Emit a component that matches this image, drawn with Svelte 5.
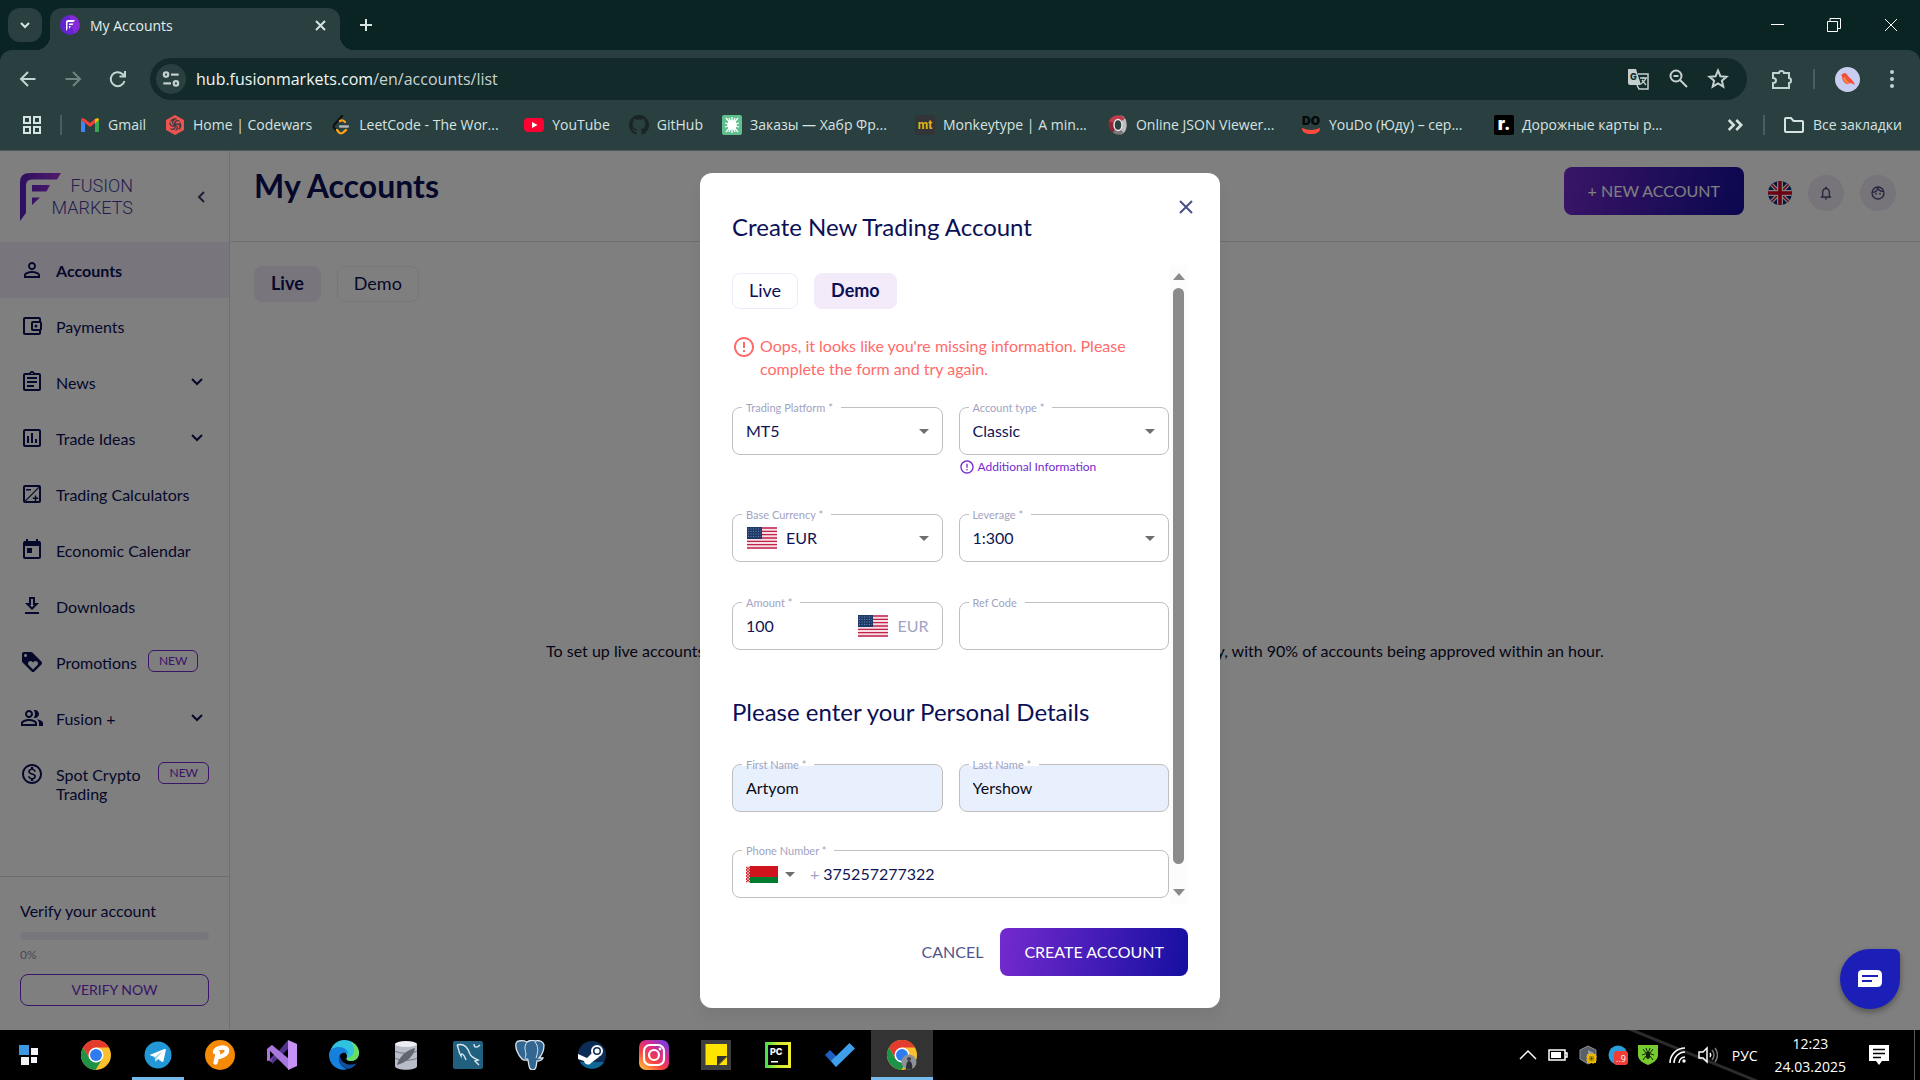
<script>
  const bookmarks = [
    { id: 'gmail', text: 'Gmail' },
    { id: 'codewars', text: 'Home | Codewars' },
    { id: 'leetcode', text: 'LeetCode - The Wor...', long: true },
    { id: 'youtube', text: 'YouTube' },
    { id: 'github', text: 'GitHub' },
    { id: 'habr', text: 'Заказы — Хабр Фр...', long: true },
    { id: 'monkey', text: 'Monkeytype | A min...', long: true },
    { id: 'json', text: 'Online JSON Viewer...', long: true },
    { id: 'youdo', text: 'YouDo (Юду) – сер...', long: true },
    { id: 'roadmap', text: 'Дорожные карты р...', long: true }
  ];

  const nav = [
    { text: 'Accounts', active: true, d: 'M12 5.9c1.16 0 2.1.94 2.1 2.1s-.94 2.1-2.1 2.1S9.9 9.16 9.9 8s.94-2.1 2.1-2.1m0 9c2.97 0 6.1 1.46 6.1 2.1v1.1H5.9V17c0-.64 3.13-2.1 6.1-2.1M12 4C9.79 4 8 5.79 8 8s1.79 4 4 4 4-1.79 4-4-1.79-4-4-4zm0 9c-2.67 0-8 1.34-8 4v3h16v-3c0-2.66-5.33-4-8-4z' },
    { text: 'Payments', d: 'M21 7.28V5c0-1.1-.9-2-2-2H5c-1.11 0-2 .9-2 2v14c0 1.1.89 2 2 2h14c1.1 0 2-.9 2-2v-2.28c.59-.35 1-.98 1-1.72V9c0-.74-.41-1.38-1-1.72zM20 9v6h-7V9h7zM5 19V5h14v2h-6c-1.1 0-2 .9-2 2v6c0 1.1.9 2 2 2h6v2H5zM16 10.5a1.5 1.5 0 1 0 0 3 1.5 1.5 0 1 0 0-3z' },
    { text: 'News', more: true, d: 'M7 15h7v2H7zm0-4h10v2H7zm0-4h10v2H7zM19 3h-4.18C14.4 1.84 13.3 1 12 1c-1.3 0-2.4.84-2.82 2H5c-1.1 0-2 .9-2 2v14c0 1.1.9 2 2 2h14c1.1 0 2-.9 2-2V5c0-1.1-.9-2-2-2zm-7-.25c.41 0 .75.34.75.75s-.34.75-.75.75-.75-.34-.75-.75.34-.75.75-.75zM19 19H5V5h14v14z' },
    { text: 'Trade Ideas', more: true, d: 'M19 3H5c-1.1 0-2 .9-2 2v14c0 1.1.9 2 2 2h14c1.1 0 2-.9 2-2V5c0-1.1-.9-2-2-2zm0 16H5V5h14v14zM7 10h2v7H7zm4-3h2v10h-2zm4 6h2v4h-2z' },
    { text: 'Trading Calculators', d: 'M19 3H5c-1.1 0-2 .9-2 2v14c0 1.1.9 2 2 2h14c1.1 0 2-.9 2-2V5c0-1.1-.9-2-2-2zm-.6 2L5 18.4V5h13.4zM5.6 19.4 19 6v13H5.6zM6 7h5v1.5H6zm8.8 6.5h1.5v2h2V17h-2v2h-1.5v-2h-2v-1.5h2z' },
    { text: 'Economic Calendar', d: 'M19 3h-1V1h-2v2H8V1H6v2H5c-1.11 0-1.99.9-1.99 2L3 19c0 1.1.89 2 2 2h14c1.1 0 2-.9 2-2V5c0-1.1-.9-2-2-2zm0 16H5V8h14v11zM7 10h5v5H7z' },
    { text: 'Downloads', d: 'M13 5v6h1.17L12 13.17 9.83 11H11V5h2m2-2H9v6H5l7 7 7-7h-4V3zm4 15H5v2h14v-2z' },
    { text: 'Promotions', badge: true, d: 'M21.41 11.58l-9-9C12.05 2.22 11.55 2 11 2H4c-1.1 0-2 .9-2 2v7c0 .55.22 1.05.59 1.42l9 9c.36.36.86.58 1.41.58.55 0 1.05-.22 1.41-.59l7-7c.37-.36.59-.86.59-1.41 0-.55-.23-1.06-.59-1.42zM5.5 7C4.67 7 4 6.33 4 5.5S4.67 4 5.5 4 7 4.67 7 5.5 6.33 7 5.5 7zm11.77 8.27L13 19.54l-4.27-4.27C8.28 14.81 8 14.19 8 13.5c0-1.38 1.12-2.5 2.5-2.5.69 0 1.32.28 1.77.74l.73.72.73-.73c.45-.45 1.08-.73 1.77-.73 1.38 0 2.5 1.12 2.5 2.5 0 .69-.28 1.32-.73 1.77z' },
    { text: 'Fusion +', more: true, d: 'M16.67 13.13C18.04 14.06 19 15.32 19 17v3h4v-3c0-2.18-3.57-3.47-6.33-3.87zM15 12c2.21 0 4-1.79 4-4s-1.79-4-4-4c-.47 0-.91.1-1.33.24C14.5 5.27 15 6.58 15 8s-.5 2.73-1.33 3.76c.42.14.86.24 1.33.24zM9 12c2.21 0 4-1.79 4-4s-1.79-4-4-4-4 1.79-4 4 1.79 4 4 4zm0-6c1.1 0 2 .9 2 2s-.9 2-2 2-2-.9-2-2 .9-2 2-2zM9 13c-2.67 0-8 1.34-8 4v3h16v-3c0-2.66-5.33-4-8-4zm6 5H3v-.99C3.2 16.29 6.3 15 9 15s5.8 1.29 6 2v1z' },
    { text: 'Spot Crypto Trading', badge: true, d: 'M12 2C6.48 2 2 6.48 2 12s4.48 10 10 10 10-4.48 10-10S17.52 2 12 2zm0 18c-4.41 0-8-3.59-8-8s3.59-8 8-8 8 3.59 8 8-3.59 8-8 8zm.31-8.86c-1.77-.45-2.34-.94-2.34-1.67 0-.84.79-1.43 2.1-1.43 1.38 0 1.9.66 1.94 1.64h1.71c-.05-1.34-.87-2.57-2.49-2.97V5H10.9v1.69c-1.51.32-2.72 1.3-2.72 2.81 0 1.79 1.49 2.69 3.66 3.21 1.95.46 2.34 1.15 2.34 1.87 0 .53-.39 1.39-2.1 1.39-1.6 0-2.23-.72-2.32-1.64H8.04c.1 1.7 1.36 2.66 2.86 2.97V19h2.34v-1.67c1.52-.29 2.72-1.16 2.73-2.77-.01-2.2-1.9-2.96-3.66-3.42z' }
  ];

  const alertPath = 'M11 15h2v2h-2v-2zm0-8h2v6h-2V7zm.99-5C6.47 2 2 6.48 2 12s4.47 10 9.99 10C17.52 22 22 17.52 22 12S17.52 2 11.99 2zM12 20c-4.42 0-8-3.58-8-8s3.58-8 8-8 8 3.58 8 8-3.58 8-8 8z';
  const tasks = ['chrome', 'telegram', 'payeer', 'vs', 'edge', 'db', 'mysql', 'postgres', 'steam', 'insta', 'sticky', 'pycharm', 'todo', 'profile'];
</script>

{#snippet usFlag()}
  <svg class="us" viewBox="0 0 30 22" aria-hidden="true">
    <path fill="#f6dfe4" d="M0 0h30v22H0z" />
    <path stroke="#c2224a" stroke-width="1.3" d="M0 1h30M0 4.3h30M0 7.6h30M0 11h30M0 14.3h30M0 17.6h30M0 21h30" />
    <path fill="#1d3a68" d="M0 0h15v12H0z" />
    <path stroke="#6f86a8" stroke-width="1" stroke-dasharray="1 1.5" d="M1 2h13M1 4.5h13M1 7h13M1 9.5h13" />
  </svg>
{/snippet}

{#snippet ukFlag()}
  <svg class="uk" viewBox="0 0 24 24" aria-hidden="true">
    <clipPath id="round"><circle cx="12" cy="12" r="12" /></clipPath>
    <g clip-path="url(#round)">
      <path fill="#00317f" d="M0 0h24v24H0z" />
      <path stroke="#fff" stroke-width="4" d="m0 0 24 24M24 0 0 24" />
      <path stroke="#d80027" stroke-width="1.5" d="m0 0 24 24M24 0 0 24" />
      <path stroke="#fff" stroke-width="6" d="M12 0v24M0 12h24" />
      <path stroke="#d80027" stroke-width="3.5" d="M12 0v24M0 12h24" />
    </g>
  </svg>
{/snippet}

{#snippet bookmarkIcon(id)}
  <svg class="fav" viewBox="0 0 20 20" aria-hidden="true">
    {#if id === 'gmail'}
      <path fill="#4285f4" d="M1 5v11a1 1 0 0 0 1 1h3V8z" />
      <path fill="#34a853" d="M19 5v11a1 1 0 0 1-1 1h-3V8z" />
      <path fill="#ea4335" d="m1 5 4 3 5 4 5-4V4l-5 4-5-4C3 2.5 1 3 1 5z" />
      <path fill="#fbbc04" d="M15 4c2-1.5 4-1 4 1l-4 3.5z" />
    {:else if id === 'codewars'}
      <path fill="#ef5350" stroke="#ef5350" stroke-width="2" stroke-linejoin="round" d="m10 1 8 4.5v9L10 19l-8-4.5v-9z" />
      <g fill="none" stroke="#303c42" stroke-width="1.3" stroke-linecap="round">
        <path d="M10 10c-1-3 1-5 4-4M10 10c2-2 5-1 5 2M10 10c3 1 3 4 1 5M10 10c1 3-1 5-4 4M10 10c-2 2-5 1-5-2M10 10c-3-1-3-4-1-5M6 6c1-1.500 3-2.500 5-2M15 8c1 2 1 4-1 6" />
      </g>
    {:else if id === 'leetcode'}
      <g fill="none" stroke-width="2.3" stroke-linecap="round">
        <path stroke="#111" d="M11 1 3.500 9.500c-1 1-1 3 0 4l2 2" />
        <path stroke="#ffa116" d="M9 6c2-1.500 3-1 5 1M6 15l2 2.500c1 1 3 1 4 0l3-2.500" />
        <path stroke="#b3b3b3" d="M9 11.500h8" />
      </g>
    {:else if id === 'youtube'}
      <rect y="3" width="20" height="14" rx="4" fill="#ff0033" /><path fill="#fff" d="m8 7 5.5 3L8 13z" />
    {:else if id === 'github'}
      <path fill="#1b2528" d="M10 0a10 10 0 0 0-3.2 19.5c.5.1.7-.2.7-.5v-2c-2.8.6-3.4-1.2-3.4-1.2-.5-1.2-1.1-1.5-1.1-1.5-.9-.6.1-.6.1-.6 1 .1 1.5 1 1.5 1 .9 1.6 2.4 1.1 3 .8 0-.6.3-1 .6-1.3-2.2-.3-4.6-1.1-4.6-5 0-1.1.4-2 1-2.7 0-.3-.4-1.3.1-2.7 0 0 .9-.2 2.8 1a9.6 9.6 0 0 1 5 0c1.9-1.2 2.8-1 2.8-1 .5 1.4.1 2.4.1 2.7.6.7 1 1.6 1 2.7 0 3.9-2.4 4.7-4.600 5 .4.3.7.9.7 1.9V19c0 .3.2.6.7.5A10 10 0 0 0 10 0z" />
    {:else if id === 'habr'}
      <rect width="20" height="20" rx="2" fill="#5fc08e" />
      <circle cx="10" cy="10" r="4.8" fill="#fff" />
      <path stroke="#fff" stroke-width="1.3" d="M10 2v16M4 3l12 14M16 3 4 17M3 8l14 4M3 12l14-4M7 3l6 14M13 3 7 17" />
    {:else if id === 'monkey'}
      <rect width="20" height="20" rx="4" fill="#323437" /><text x="10" y="14" text-anchor="middle" font-family="Roboto, sans-serif" font-size="12" font-weight="700" fill="#e2b714">mt</text>
    {:else if id === 'json'}
      <path fill="none" stroke="#bdbdbd" stroke-width="4.5" d="M12 17.5c6-2 6-13 0-15" />
      <path fill="none" stroke="#c23b4c" stroke-width="4.5" d="M15 5C12 1 4 2 3 8" />
      <path fill="none" stroke="#8b2735" stroke-width="4.5" d="M3 7c-1 5 2 9 5 10" />
      <path fill="none" stroke="#777" stroke-width="4" d="M6 16c3 2 6 2 8 0" />
      <ellipse cx="10" cy="10" rx="4" ry="5.5" fill="none" stroke="#e8e8e8" stroke-width="1.5" />
    {:else if id === 'youdo'}
      <text x="10" y="10" text-anchor="middle" font-family="Inter, sans-serif" font-size="12" font-weight="900" fill="#050808">DO</text>
      <path fill="#ff4b3e" d="M1 13q9 4 18 0c0 4-3 6-9 6s-9-2-9-6z" />
    {:else}
      <rect width="20" height="20" rx="2" fill="#000" /><text x="10" y="15" text-anchor="middle" font-family="Inter, sans-serif" font-size="17" font-weight="900" fill="#fff">r.</text>
    {/if}
  </svg>
{/snippet}

{#snippet chromeLogo()}
  <circle cx="15" cy="15" r="15" fill="#fbc02d" />
  <path fill="#e33b2e" d="M2 7.5a15 15 0 0 1 26 0H15L8.5 18.500z" />
  <path fill="#1e9247" d="M2 7.5 8.6 18.7l6.4 3.8 6.2-3.5L14.5 30A15 15 0 0 1 2 7.5z" />
  <circle cx="15" cy="15" r="7.5" fill="#fff" /><circle cx="15" cy="15" r="6" fill="#2f7cf0" />
{/snippet}

{#snippet taskIcon(id)}
  <svg class="app" viewBox="0 0 30 30" aria-hidden="true">
    {#if id === 'chrome'}
      {@render chromeLogo()}
    {:else if id === 'profile'}
      {@render chromeLogo()}
      <circle cx="22" cy="22" r="7.5" fill="#8d9298" /><path fill="#2c3038" d="M19 29c0-5 1-8 3-8s4 3 3 8z" /><circle cx="22" cy="19" r="2" fill="#4a4240" />
    {:else if id === 'telegram'}
      <circle cx="15" cy="15" r="13.5" fill="#2299d6" /><path fill="#fff" d="m6.5 15 15-6c1-.3 1.5.3 1.3 1.3L20.5 21c-.2 1-1 1.2-1.7.8L15 19l-2.5 2.5-.8-4.5z" /><path fill="#a9d3ea" d="m11.700 17 8-6-5.700 7-1.500 3.500z" />
    {:else if id === 'payeer'}
      <circle cx="15" cy="15" r="15" fill="#f58a07" /><path fill="none" stroke="#fff" stroke-width="4.5" stroke-linecap="round" stroke-linejoin="round" d="M10.5 22.5 13 13M10 12c1-5 12-6 12-1.5S15 17 12.5 17" />
    {:else if id === 'vs'}
      <path fill="#7044a8" d="m0 9 5-4 6 6-5 8v4L0 20z" /><path fill="#52338c" d="M5 19 21 0v9L5 24z" /><path fill="#a878dc" d="m0 9 5-4 17 14v11L3 11v9l-3 1z" /><path fill="#c792f5" d="m21 0 9 4v22l-9 4z" /><path fill="#000" d="m3 11 4 4-4 4z" />
    {:else if id === 'edge'}
      <path fill="#31c3dd" d="M1 12C3 4 9 0 15 0c9 0 15 6 15 13 0 5-4 8-8 8-3 0-6-1-4-4 1-6-10-9-17-5z" /><path fill="#6bdd62" d="M22 2c5 2 8 6 8 11 0 5-4 8-8 8-2 0-5-1-4-3 8-1 9-10 4-16z" /><path fill="#1681dd" d="M0 15C0 9 5 7 10 7c5 0 9 3 9 7-5-3-9 0-9 5 0 5 4 9 9 10C9 32 0 25 0 15z" /><path fill="#124e9c" d="M11 15c-4 6 2 13 9 14 3-1 6-3 8-6-8 4-17 0-17-8z" />
    {:else if id === 'db'}
      <path fill="#b9bdc9" d="M4 4v22c0 5 22 5 22 0V4z" /><ellipse cx="15" cy="4" rx="11" ry="3" fill="#eceef4" /><path fill="none" stroke="#70747e" d="M4 11c4 3 18 3 22 0M4 18c4 3 18 3 22 0" /><path fill="#62666e" d="M6 25C8 17 15 10 24 8c-1 8-8 14-18 17z" />
    {:else if id === 'mysql'}
      <rect x="0" y="1" width="30" height="28" rx="2" fill="#22607f" /><path fill="none" stroke="#d7e5ec" stroke-width="1.4" d="M4 5c7-2 11 3 13 9 1 3 4 4 8 6l-3 1 4 4M4 5c2 3 1 6 4 11 0-4 3-2 5 4M21 4c0 4 3 4 6 1" />
    {:else if id === 'postgres'}
      <path fill="#336791" stroke="#dbe5ee" stroke-width="1.3" d="M4 1c4-1 6 0 8 1 3-2 6-2 8-1 4-1 8 0 9 4 0 5-2 10-5 13h4c-1 2-4 3-6 3-1 4 0 9-4 9s-4-4-5-10c-3 0-4 1-6-1C3 15 0 8 1 4c0-1 1-3 3-3z" /><path fill="none" stroke="#dbe5ee" d="M12 2c-3 4-2 8-1 12 0 3-3 5 2 5M20 2c4 5 3 10 1 16" />
    {:else if id === 'steam'}
      <circle cx="15" cy="15" r="14" fill="#0d2c55" /><path fill="#0f6796" d="M3 22a14 14 0 0 0 24 0z" /><path fill="#fff" d="m1 14 9 4 7-7 5 6-8 6c-2 3-7 1-7-2l-6-2z" /><circle cx="20" cy="11" r="5" fill="#0d2c55" stroke="#fff" stroke-width="2" /><circle cx="20" cy="11" r="2.5" fill="#fff" />
    {:else if id === 'insta'}
      <linearGradient id="ig" x1="0" y1="1" x2=".8" y2="0"><stop stop-color="#ffd23e" /><stop offset=".4" stop-color="#f7443f" /><stop offset=".7" stop-color="#d42b8e" /><stop offset="1" stop-color="#7b3ddb" /></linearGradient>
      <rect width="30" height="30" rx="7" fill="url(#ig)" /><rect x="5" y="5" width="20" height="20" rx="6" fill="none" stroke="#fff" stroke-width="2.2" /><circle cx="15" cy="15" r="5" fill="none" stroke="#fff" stroke-width="2.2" /><circle cx="21" cy="9" r="1.4" fill="#fff" />
    {:else if id === 'sticky'}
      <path fill="#3f3f3f" d="M0 0h30v30H0z" /><path fill="#ffe400" d="M4.5 4H26v12l-9 9H4.500z" /><path fill="#333" d="M16 16h10l-10 10z" /><path fill="#ffe400" d="M26 17v8h-8z" />
    {:else if id === 'pycharm'}
      <linearGradient id="pc"><stop stop-color="#3be04f" /><stop offset=".5" stop-color="#cfe82e" /><stop offset="1" stop-color="#f4ee2e" /></linearGradient>
      <path fill="url(#pc)" d="M2 2h26v26H2z" /><path fill="#000" d="M5 5h20v20H5z" /><text x="7" y="15" font-family="Inter, sans-serif" font-size="9" font-weight="800" fill="#fff">PC</text><path fill="#fff" d="M8 21h7v1.5H8z" />
    {:else if id === 'todo'}
      <path fill="#1f5fc4" d="m0 15 5-5 9 9-3 8z" /><path fill="#3ea0ea" d="m6 21 18.5-18L30 8.5 11 27z" />
    {/if}
  </svg>
{/snippet}

<div class="screen">
  <header class="browser">
    <div class="strip">
      <button class="search-tabs" aria-label="Search tabs"><svg viewBox="0 0 34 34"><path d="m13 15 4 4 4-4" /></svg></button>
      <div class="tab">
        <svg class="fav" viewBox="0 0 20 20" aria-hidden="true"><circle cx="10" cy="10" r="10" fill="#6425cf" /><path fill="#a332e0" d="M10 0a10 10 0 0 1 5 18.600C12 14 9 6 10 0z" opacity=".5" /><path fill="#fff" d="M6 16V7q0-2 2-2h7l-1.500 2H8.500q-1 0-1 1v6zM9 8.500h4.500L12.500 10H9zM9 11h2l-2 3z" /></svg>
        <span>My Accounts</span>
        <button aria-label="Close tab"><svg viewBox="0 0 20 20"><path d="m6 6 9 9m0-9-9 9" /></svg></button>
      </div>
      <button class="plus" aria-label="New tab"><svg viewBox="0 0 20 20"><path d="M10 4v12M4 10h12" /></svg></button>
      <div class="window">
        <button aria-label="Minimize"><svg viewBox="0 0 16 16"><path d="M2 7.500h13" /></svg></button>
        <button aria-label="Restore"><svg viewBox="0 0 16 16"><path d="M1.500 4.500h10v10h-10zM4 4V1.500h10.500v10H12" /></svg></button>
        <button aria-label="Close"><svg viewBox="0 0 16 16"><path d="m2 2 12 12m0-12L2 14" /></svg></button>
      </div>
    </div>

    <div class="tools">
      <button aria-label="Back"><svg viewBox="0 0 20 20"><path d="M17.500 10H3m7-7-7 7 7 7" /></svg></button>
      <button class="dim" aria-label="Forward"><svg viewBox="0 0 20 20"><path d="M2.500 10H17m-7-7 7 7-7 7" /></svg></button>
      <button aria-label="Reload"><svg viewBox="0 0 20 20"><path d="M16.500 12a7 7 0 1 1-2-7l2.500 2.500M17 2v5.500h-5.500" /></svg></button>
      <div class="address">
        <button class="site" aria-label="Site information"><svg viewBox="0 0 20 20"><circle cx="5.500" cy="6" r="2" /><path d="M10 6h7" /><circle cx="14.500" cy="14" r="2" /><path d="M3 14h7" /></svg></button>
        <label class="url"><input aria-label="Address" value="" /><span><b>hub.fusionmarkets.com</b>/en/accounts/list</span></label>
        <button aria-label="Translate"><svg viewBox="0 0 22 22"><path fill="currentColor" stroke="none" d="M1 1h8l5 16H3a2 2 0 0 1-2-2z" /><path stroke-width="1.500" d="M11 6h10v15h-9l-2-4" /><path stroke-width="1.300" d="M13 10h7m-4-1v2m3-1c-1 3-3 4-5 6m1-4 4 5" /><text x="3" y="12" font-family="Inter, sans-serif" font-size="9" font-weight="800" fill="#122a2a" stroke="none">G</text></svg></button>
        <button aria-label="Zoom"><svg viewBox="0 0 22 22"><circle cx="9" cy="8" r="5.500" /><path d="m13 12 7 7M6.500 8h5" /></svg></button>
        <button aria-label="Bookmark this page"><svg viewBox="0 0 22 22"><path d="m11 2.500 2.400 5.700 6.100.5-4.600 4 1.400 6L11 15.500l-5.300 3.200 1.400-6-4.600-4 6.100-.5z" /></svg></button>
      </div>
      <button class="ext" aria-label="Extensions"><svg viewBox="0 0 22 22"><path d="M2 5h6a2.500 2 0 0 1 5 0h5v5a2 2.500 0 0 1 0 5v5H2v-5c4 0 4-5 0-5z" /></svg></button>
      <i class="rule"></i>
      <button class="avatar" aria-label="Profile"><svg viewBox="0 0 25 25"><circle cx="12.500" cy="12.500" r="12.500" fill="#c9cdef" stroke="none" /><path fill="#f2503f" stroke="none" d="m6 8 3-2c2 0 3 1 4 3l5 5 2 4-4-2-4 1c-3-1-5-4-5-8z" /><path fill="#ff8a3c" stroke="none" d="M8 11c1 4 4 6 7 5-2-1-4-3-5-6z" /></svg></button>
      <button aria-label="Menu"><svg viewBox="0 0 20 20"><g fill="currentColor" stroke="none"><circle cx="10" cy="3" r="2" /><circle cx="10" cy="10" r="2" /><circle cx="10" cy="17" r="2" /></g></svg></button>
    </div>

    <nav class="bookmarks" aria-label="Bookmarks">
      <button class="grid-btn" aria-label="Apps"><svg viewBox="0 0 20 20"><path d="M2 2h6v6H2zM12 2h6v6h-6zM2 12h6v6H2zM12 12h6v6h-6z" /></svg></button>
      <i class="rule"></i>
      {#each bookmarks as b}
        <a href="#{b.id}" class:long={b.long}>{@render bookmarkIcon(b.id)}<span>{b.text}</span></a>
      {/each}
      <button class="overflow" aria-label="More bookmarks"><svg viewBox="0 0 16 16"><path d="m3 4 4 4-4 4M9 4l4 4-4 4" /></svg></button>
      <i class="rule"></i>
      <a class="all" href="#all"><svg class="folder" viewBox="0 0 22 20"><path d="M2 4q0-1 1-1h5l2.500 3H19q1 0 1 1v9q0 1-1 1H3q-1 0-1-1z" /></svg><span>Все закладки</span></a>
    </nav>
  </header>

  <div class="page">
    <aside>
      <div class="brand">
        <svg class="mark" viewBox="0 0 41 48" aria-hidden="true">
          <linearGradient id="fm"><stop stop-color="#5a1fc0" /><stop offset="1" stop-color="#a238d8" /></linearGradient>
          <path fill="url(#fm)" d="M0 48V9q0-9 10-9h31l-4 6.500H12q-6 0-6 6V40zM12 12h18l-3.500 6.500H12zM12 24.500h8L12 32z" />
        </svg>
        <span class="word">FUSION<br />MARKETS</span>
        <button aria-label="Collapse menu"><svg viewBox="0 0 16 16"><path d="m11 3-5 5 5 5" /></svg></button>
      </div>
      <nav class="menu" aria-label="Main">
        {#each nav as n}
          <a href="#{n.text}" class:active={n.active}>
            <svg class="glyph" viewBox="0 0 24 24"><path fill-rule="evenodd" d={n.d} /></svg>
            <span>{n.text}</span>
            {#if n.badge}<em>NEW</em>{/if}
            {#if n.more}<svg class="more" viewBox="0 0 16 16"><path d="m3 5 5 5 5-5" /></svg>{/if}
          </a>
        {/each}
      </nav>
      <section class="verify">
        <p>Verify your account</p>
        <div class="bar"></div>
        <small>0%</small>
        <button>VERIFY NOW</button>
      </section>
    </aside>

    <main>
      <div class="top">
        <h1>My Accounts</h1>
        <button class="primary">+ NEW ACCOUNT</button>
        <button class="flag" aria-label="Language">{@render ukFlag()}</button>
        <button class="round" aria-label="Notifications"><svg viewBox="0 0 24 24"><path d="M12 22c1.100 0 2-.9 2-2h-4c0 1.100.9 2 2 2zm6-6v-5c0-3.070-1.630-5.640-4.500-6.320V4c0-.83-.67-1.500-1.500-1.500s-1.500.67-1.500 1.500v.68C7.640 5.360 6 7.920 6 11v5l-2 2v1h16v-1l-2-2zm-2 1H8v-6c0-2.480 1.510-4.500 4-4.500s4 2.020 4 4.500v6z" /></svg></button>
        <button class="round" aria-label="Profile menu"><svg viewBox="0 0 24 24"><path fill="none" stroke="currentColor" stroke-width="2" d="M3 12a9 9 0 1 0 18 0 9 9 0 1 0-18 0M3.500 11c4 0 7-2 8-6 2 3 5 5 9 4.500" /><circle cx="9" cy="13" r="1.300" /><circle cx="15" cy="13" r="1.300" /></svg></button>
      </div>
      <div class="kinds">
        <button class="on">Live</button>
        <button>Demo</button>
      </div>
      <p class="empty">To set up live accounts, please verify your profile. We review all applications quickly and diligently, with 90% of accounts being approved within an hour.</p>
    </main>

    <div class="overlay">
      <form class="dialog" aria-labelledby="dialog-title">
        <button type="button" class="close" aria-label="Close"><svg viewBox="0 0 16 16"><path d="m2 2 12 12m0-12L2 14" /></svg></button>
        <h2 id="dialog-title">Create New Trading Account</h2>
        <div class="scroller">
          <div class="body">
            <div class="kinds">
              <button type="button">Live</button>
              <button type="button" class="on">Demo</button>
            </div>
            <div class="error">
              <svg viewBox="0 0 24 24"><path d={alertPath} /></svg>
              <p>Oops, it looks like you're missing information. Please complete the form and try again.</p>
            </div>
            <div class="fields">
              <div class="field">
                <label for="platform">Trading Platform *</label>
                <select id="platform"><option>MT5</option></select><i class="caret"></i>
              </div>
              <div class="cell">
                <div class="field">
                  <label for="type">Account type *</label>
                  <select id="type"><option>Classic</option></select><i class="caret"></i>
                </div>
                <a class="info" href="#info"><svg viewBox="0 0 24 24"><path d={alertPath} /></svg>Additional Information</a>
              </div>
              <div class="field">
                <label for="currency">Base Currency *</label>
                {@render usFlag()}<select id="currency"><option>EUR</option></select><i class="caret"></i>
              </div>
              <div class="field">
                <label for="leverage">Leverage *</label>
                <select id="leverage"><option>1:300</option></select><i class="caret"></i>
              </div>
              <div class="field">
                <label for="amount">Amount *</label>
                <input id="amount" value="100" />{@render usFlag()}<span class="unit">EUR</span>
              </div>
              <div class="field">
                <label for="ref">Ref Code</label>
                <input id="ref" />
              </div>
            </div>
            <h3>Please enter your Personal Details</h3>
            <div class="fields personal">
              <div class="field filled">
                <label for="first">First Name *</label>
                <input id="first" value="Artyom" />
              </div>
              <div class="field filled">
                <label for="last">Last Name *</label>
                <input id="last" value="Yershow" />
              </div>
              <div class="field wide">
                <label for="phone">Phone Number *</label>
                <button type="button" class="country" aria-label="Country: Belarus">
                  <svg class="by" viewBox="0 0 32 17"><path fill="#d0141e" d="M0 0h32v11H0z" /><path fill="#007c30" d="M0 11h32v6H0z" /><path fill="#f3d9dc" d="M0 0h4v17H0z" /><path fill="none" stroke="#d0141e" stroke-width="1" d="m0 1 4 3-4 3 4 3-4 3 4 3M4 1 0 4l4 3-4 3 4 3-4 3" /></svg>
                  <i class="caret"></i>
                </button>
                <span class="unit">+</span><input id="phone" value="375257277322" />
              </div>
            </div>
          </div>
          <div class="track" aria-hidden="true"><i class="up"></i><i class="thumb"></i><i class="down"></i></div>
        </div>
        <div class="actions">
          <button type="button" class="cancel">CANCEL</button>
          <button type="submit" class="primary">CREATE ACCOUNT</button>
        </div>
      </form>
    </div>

    <button class="chat" aria-label="Open chat"><svg viewBox="0 0 24 18"><path fill="#fff" d="M4 0h15q5 0 5 5v7q0 5-5 5H0V4q0-4 4-4z" /><path stroke="#1b1fb8" stroke-width="2" d="M4 6h16M4 11h10" /></svg></button>
  </div>

  <footer class="taskbar">
    <svg class="streak" viewBox="0 0 130 50" aria-hidden="true"><path d="M0-2 130 51" /></svg>
    <button class="start" aria-label="Start"><svg viewBox="0 0 20 20"><path fill="#3d97e3" d="M0 0h10v10H0z" /><path fill="#f4f4f8" d="M12 3h7v7h-7zM2 12h8v8H2zM12 12h6v6h-6z" /></svg></button>
    {#each tasks as t}
      <button class="task" class:running={t === 'telegram'} class:current={t === 'profile'} aria-label={t}>{@render taskIcon(t)}</button>
    {/each}
    <div class="tray">
      <button aria-label="Show hidden icons"><svg viewBox="0 0 20 20"><path d="m2 14 8-8 8 8" /></svg></button>
      <button aria-label="Battery"><svg viewBox="0 0 20 20"><path d="M1 5h16v10H1zM17 8h2v4h-2" /><path fill="#fff" stroke="none" d="M3 7h10v6H3z" /></svg></button>
      <button aria-label="System utility"><svg viewBox="0 0 20 20"><path fill="#596069" stroke="#8b929a" stroke-width="1" d="m10 1 8 4v9l-8 5-8-5V5z" /><path fill="#c7ccd1" stroke="none" d="m10 5 6 3-5 8z" opacity=".6" /><path fill="#2b2a10" stroke="#e8b800" stroke-width="2" d="M10 10h7v7h-7z" /><path stroke="#e8b800" stroke-width="1" d="M8 12h11M8 15h11M12 8v11M15 8v11" /></svg></button>
      <button aria-label="Messages"><svg viewBox="0 0 20 20"><circle cx="10" cy="10" r="9.500" fill="#2a9fdc" stroke="none" /><rect x="6" y="6" width="14" height="14" rx="3" fill="#f23c34" stroke="none" /><text x="13" y="17" text-anchor="middle" font-family="Open Sans, sans-serif" font-size="9" fill="#fff" stroke="none">..9</text></svg></button>
      <button aria-label="Antivirus"><svg viewBox="0 0 20 20"><path fill="#76cc2f" stroke="none" d="M0 0h20v10c0 5-5 8-10 10C5 18 0 15 0 10z" /><ellipse cx="10" cy="10" rx="2" ry="4" fill="#10220a" stroke="none" /><path stroke="#10220a" stroke-width="1" d="M5 4l3 4h4l3-4M4 10l3-1h6l3 1M5 15l3-4h4l3 4M8 3l1 3M12 3l-1 3" /></svg></button>
      <button aria-label="Network"><svg viewBox="0 0 20 20"><circle cx="16" cy="16" r="1.700" fill="#fff" stroke="none" /><path d="M11 18a6 6 0 0 1 6-6M6 18A11 11 0 0 1 17 7M2 18A15 15 0 0 1 17 3" /></svg></button>
      <button aria-label="Volume"><svg viewBox="0 0 20 20"><path d="M1 7h4l4-4v14l-4-4H1zM12 8q1.500 2 0 4" /><path stroke="#777" d="M14 5q4 5 0 10M17 3q5 7 0 14" /></svg></button>
      <span class="lang">РУС</span>
      <time>12:23<br />24.03.2025</time>
      <button aria-label="Notifications"><svg viewBox="0 0 20 20"><path fill="#fff" stroke="none" d="M0 0h20v16h-7l-3 4-3-4H0z" /><path stroke="#000" d="M4 4.500h12M4 8.500h12M4 12.500h8" /></svg></button>
      <i class="peek"></i>
    </div>
  </footer>
</div>

<style>
  :global(body) { margin: 0; }
  .screen {
    display: flex; flex-direction: column; min-height: 100vh;
    font-family: Lato, sans-serif; font-size: 16px; color: #0a1056;
  }
  .screen * { box-sizing: border-box; }
  button { border: 0; padding: 0; margin: 0; background: none; font: inherit; color: inherit; cursor: pointer; }
  a { color: inherit; text-decoration: none; }
  h1, h2, h3, p { margin: 0; font-weight: 400; }
  svg { display: block; flex: none; }

  /* browser frame */
  .browser { font-family: "Open Sans", sans-serif; font-size: 14px; color: #d5e3e1; background: #0a2423; }
  .browser button svg, .folder { width: 20px; height: 20px; fill: none; stroke: currentColor; stroke-width: 2; }
  .fav { width: 20px; height: 20px; }
  .strip { display: flex; align-items: center; height: 50px; padding-left: 8px; }
  .search-tabs { width: 34px; height: 34px; border-radius: 12px; background: #2a3f40; }
  .browser .search-tabs svg { width: 34px; height: 34px; }
  .tab {
    position: relative; display: flex; align-items: center; gap: 10px; align-self: flex-end;
    width: 290px; height: 42px; margin-left: 8px; padding: 0 10px 8px 10px; border-radius: 12px 12px 0 0; background: #2a3f40;
  }
  .tab::before, .tab::after { content: ""; position: absolute; bottom: 0; width: 14px; height: 14px; }
  .tab::before { right: 100%; background: radial-gradient(circle at 0 0, transparent 14px, #2a3f40 14px); }
  .tab::after { left: 100%; background: radial-gradient(circle at 100% 0, transparent 14px, #2a3f40 14px); }
  .tab span { flex: 1; color: #e4eeec; }
  .plus { margin-left: 16px; }
  .window { display: flex; margin-left: auto; padding-right: 1px; }
  .window button { display: grid; place-items: center; width: 57px; height: 50px; color: #fff; }
  .browser .window svg { width: 16px; height: 16px; stroke-width: 1; }
  .tools { display: flex; align-items: center; height: 58px; padding: 0 18px; background: #2a3f40; border-radius: 12px 12px 0 0; }
  .tools > button { margin-right: 25px; color: #bcd6d4; }
  .tools .dim { color: #6d8583; }
  .address { flex: 1; display: flex; align-items: center; gap: 18px; height: 42px; margin-left: -3px; padding: 0 18px 0 6px; border-radius: 21px; background: #122a2a; }
  .address button { color: #c3d0ce; }
  .browser .address svg { width: 22px; height: 22px; }
  .address .site { display: grid; place-items: center; width: 30px; height: 30px; border-radius: 50%; background: #2a3f40; }
  .url { position: relative; flex: 1; display: flex; margin-left: -8px; font-size: 16px; line-height: 22px; color: #c6d3d1; }
  .url input { position: absolute; inset: 0; opacity: 0; }
  .url b { font-weight: 400; color: #f0f6f5; }
  .tools > .ext { margin: 0 20px 0 24px; }
  .browser .ext svg { width: 22px; height: 22px; }
  .rule { flex: none; width: 2px; height: 20px; background: #46605f; }
  .tools > .avatar { margin: 0 22px 0 20px; }
  .browser .avatar svg { width: 25px; height: 25px; }
  .tools > button:last-child { margin-right: 0; }
  .bookmarks { display: flex; align-items: center; height: 43px; padding: 0 18px 9px 22px; background: #2a3f40; border-bottom: 1px solid #4a5a5b; }
  .grid-btn { margin-right: 18px; }
  .bookmarks .rule + a { margin-left: 18px; }
  .bookmarks a { display: flex; align-items: center; gap: 8px; margin-right: 19px; white-space: nowrap; }
  .bookmarks .long span { width: 146px; }
  .overflow { margin-left: auto; }
  .browser .overflow svg { width: 20px; height: 20px; }
  .overflow + .rule { margin-left: 18px; }
  .bookmarks .all { margin: 0 0 0 18px; }
  .folder { width: 22px; }

  /* site shell */
  .page { position: relative; flex: 1; display: flex; background: #fff; }
  aside { display: flex; flex-direction: column; width: 230px; border-right: 1px solid #dcdce6; }
  .brand { display: flex; align-items: flex-start; height: 91px; padding: 22px 20px 0; }
  .mark { width: 41px; height: 48px; }
  .word { flex: none; width: 84px; margin: 2px 0 0 -12px; font-family: Roboto, sans-serif; font-weight: 300; font-size: 18px; line-height: 22px; text-align: right; color: #4b3aa0; }
  .brand button { margin: 16px 0 0 60px; }
  .brand button svg { width: 16px; height: 16px; fill: none; stroke: #3a3d70; stroke-width: 2; }
  .menu { flex: 1; }
  .menu a { display: flex; align-items: flex-start; min-height: 56px; padding: 16px 20px 0; line-height: 19px; }
  .menu a.active { background: #f3eafa; font-weight: 700; }
  .menu span { margin: 3px 0 0 12px; max-width: 140px; }
  .menu em { margin: 0 0 0 11px; padding: 0 10px; border: 1px solid #7529cf; border-radius: 6px; font-style: normal; font-size: 12px; line-height: 20px; color: #7529cf; }
  .menu a:last-child span { width: 92px; }
  .glyph { width: 24px; height: 24px; fill: #0a1056; }
  .more { width: 16px; height: 16px; margin: 4px 4px 0 auto; fill: none; stroke: #0a1056; stroke-width: 2; }
  .verify { display: flex; flex-direction: column; padding: 23px 20px 24px; border-top: 1px solid #d9d8ea; }
  .verify p { line-height: 22px; }
  .bar { height: 8px; margin-top: 10px; border-radius: 4px; background: #f0eafa; }
  .verify small { margin: 7px 0 11px; font-size: 12px; line-height: 16px; color: #9092ac; }
  .verify button { height: 32px; padding-bottom: 2px; border: 1px solid #7529cf; border-radius: 8px; font-size: 14px; color: #7529cf; }

  main { flex: 1; display: flex; flex-direction: column; }
  .top { display: flex; align-items: flex-start; height: 91px; padding: 16px 24px 0; border-bottom: 1px solid #dcdce6; }
  .top h1 { flex: 1; font-size: 32px; line-height: 38px; font-weight: 700; }
  .primary { height: 48px; padding: 0 24px 2px; border-radius: 8px; background: linear-gradient(100deg, #742acf, #150f9f); color: #fff; font-size: 16px; }
  .flag { margin: 14px 16px 0 24px; }
  .uk { width: 24px; height: 24px; }
  .round { display: grid; place-items: center; width: 36px; height: 36px; margin: 8px 0 0; border-radius: 50%; background: #efe8f5; color: #4b4d7c; }
  .round + .round { margin-left: 16px; }
  .round svg { width: 16px; height: 16px; fill: currentColor; }
  .kinds { display: flex; gap: 16px; }
  .kinds button { height: 36px; padding: 0 16px 2px; border: 1px solid #f0eafa; border-radius: 8px; font-size: 18px; }
  .kinds .on { border-color: #f3eafa; background: #f3eafa; font-weight: 700; }
  main .kinds { padding: 24px; }
  .empty { flex: 1; display: grid; place-items: center; padding-bottom: 56px; text-align: center; white-space: nowrap; color: #0a0a2c; }

  /* dialog */
  .overlay { position: absolute; inset: 0; display: grid; place-items: center; background: rgba(0, 0, 0, 0.5); }
  .dialog { position: relative; width: 520px; padding: 32px; border-radius: 12px; background: #fff; box-shadow: 0 11px 15px rgba(0, 0, 0, 0.05); }
  .close { position: absolute; top: 26px; right: 26px; }
  .close svg { width: 16px; height: 16px; fill: none; stroke: #4a4e86; stroke-width: 2; }
  .dialog h2, .dialog h3 { font-size: 24px; line-height: 44px; }
  .scroller { display: flex; margin-top: 16px; }
  .body { flex: 1; padding: 8px 0 6px; }
  .error { display: flex; gap: 4px; margin: 25px 0 27px; color: #ff6b6b; line-height: 23px; }
  .error svg { width: 24px; height: 24px; margin-top: 1px; fill: currentColor; }
  .fields { display: grid; grid-template-columns: 1fr 1fr; gap: 40px 16px; }
  .field { position: relative; display: flex; align-items: center; height: 48px; padding: 0 13px; border: 1px solid #bfbfc3; border-radius: 8px; background: #fff; }
  .field label { position: absolute; top: -7px; left: 9px; isolation: isolate; padding: 0 8px 0 4px; font-size: 11px; line-height: 14px; color: #a2a3c2; }
  .field label::before { content: ""; position: absolute; inset: 6px 0; z-index: -1; height: 2px; background: #fff; }
  .field select, .field input { flex: 1; min-width: 0; width: 100%; height: 44px; padding: 0 0 2px; border: 0; outline: 0; appearance: none; background: none; font: inherit; color: #0f1553; }
  .caret { flex: none; width: 0; height: 0; border: 5px solid transparent; border-top-color: #6d6d72; border-bottom: 0; }
  .us { width: 30px; height: 22px; margin: 0 9px 0 1px; }
  .unit { padding-bottom: 2px; color: #a2a3c2; }
  .cell { height: 67px; }
  .info { display: flex; align-items: center; gap: 3px; margin-top: 3px; font-size: 12px; line-height: 17px; color: #7529cf; }
  .info svg { width: 16px; height: 16px; fill: currentColor; }
  .dialog h3 { margin: 40px 0 30px; }
  .personal { gap: 38px 16px; }
  .field.filled { background: #e8f0fe; }
  .field.filled input { color: #0b0b14; }
  .wide { grid-column: 1 / -1; }
  .country { display: flex; align-items: center; gap: 7px; margin-right: 15px; }
  .by { width: 32px; height: 17px; }
  .wide .unit { margin-right: 4px; }
  .track { display: flex; flex-direction: column; align-items: center; width: 19px; padding: 8px 0; background: #fcfcfc; }
  .up, .down { width: 0; height: 0; border: 6px solid transparent; }
  .up { border-top: 0; border-bottom: 7px solid #8b8b8b; }
  .down { border-bottom: 0; border-top: 7px solid #8b8b8b; }
  .thumb { flex: 1; width: 11px; margin: 8px 0 25px; border-radius: 6px; background: #8b8b8b; }
  .actions { display: flex; justify-content: flex-end; gap: 17px; margin-top: 24px; }
  .cancel { padding-bottom: 2px; color: #51568c; }
  .chat { position: absolute; right: 20px; bottom: 21px; display: grid; place-items: center; width: 60px; height: 60px; border-radius: 50% 6px 50% 50%; background: #1b1fb8; box-shadow: 0 3px 6px rgba(0, 0, 0, 0.35); }
  .chat svg { width: 24px; height: 18px; }

  /* taskbar */
  .taskbar { position: relative; display: flex; height: 50px; background: #000; color: #fff; font-family: "Open Sans", sans-serif; font-size: 14px; }
  .streak { position: absolute; right: 163px; top: 0; width: 130px; height: 50px; fill: none; stroke: #2b2b2b; stroke-width: 3; }
  .start { display: grid; place-items: center; width: 58px; margin-right: 7px; }
  .start svg { width: 20px; height: 20px; }
  .task { position: relative; display: grid; place-items: center; width: 62px; }
  .app { width: 30px; height: 30px; }
  .running::after, .current::after { content: ""; position: absolute; inset: auto 5px 0 5px; height: 3px; background: #76b9ed; }
  .current { background: #333; }
  .current::after { left: 0; right: 0; }
  .tray { position: relative; display: flex; align-items: center; gap: 10px; margin-left: auto; }
  .tray svg { width: 20px; height: 20px; fill: none; stroke: #fff; stroke-width: 1.5; }
  .lang { margin-left: 4px; }
  .tray time { margin: 0 13px 0 7px; text-align: center; line-height: 23px; }
  .peek { width: 6px; height: 50px; margin-left: 15px; border-left: 1px solid #5a5a5a; }
</style>
